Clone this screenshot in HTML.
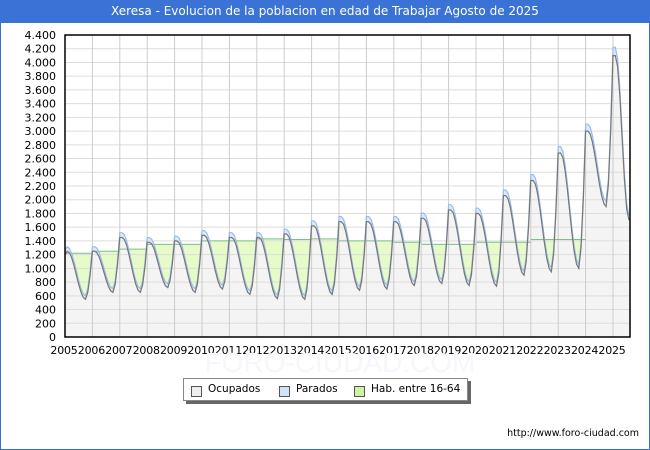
<!DOCTYPE html>
<html><head><meta charset="utf-8"><style>
body{margin:0;width:650px;height:450px;overflow:hidden;background:#fff;font-family:"DejaVu Sans","Liberation Sans",sans-serif;}
#wrap{position:absolute;left:0;top:0;width:648px;height:448px;border:1px solid #3a6fd0;}
#title{position:absolute;left:0;top:0;width:650px;height:23px;background:#3a72d6;color:#fff;font-size:12px;line-height:23px;text-align:center;}
svg{position:absolute;left:0;top:0;}
.yl{font-size:11px;fill:#000;text-anchor:end;}
.xl{font-size:11px;fill:#000;text-anchor:middle;letter-spacing:-0.2px;}
#legend{position:absolute;left:183px;top:378px;width:283px;height:21px;border:1px solid #888;background:#fff;box-shadow:3px 3px 0 #666;font-size:10.5px;}
#legend span{position:absolute;top:4px;}
#legend i{position:absolute;top:7px;width:9px;height:9px;border:1px solid #555;}
#url{position:absolute;right:11px;top:428px;font-size:9.5px;color:#000;}
</style></head><body>
<div id="wrap"></div>
<div id="title">Xeresa - Evolucion de la poblacion en edad de Trabajar Agosto de 2025</div>
<svg id="s" width="650" height="450"></svg>
<div id="legend">
<i style="left:7px;background:#eee"></i><span style="left:24px">Ocupados</span>
<i style="left:95px;background:#cfe4fb"></i><span style="left:112px">Parados</span>
<i style="left:170px;background:#ccf5a0"></i><span style="left:187px">Hab. entre 16-64</span>
</div>
<div id="url">http://www.foro-ciudad.com</div>
<script>
var L=65,R=630,T=35,B=337,K=(B-T)/4400,YW=27.4;
function X(t){return L+t*YW;}function Y(v){return B-v*K;}
var P=[1250,1250,1450,1380,1400,1480,1450,1450,1500,1620,1680,1680,1680,1730,1850,1800,2060,2280,2680,3000,4100];
var Tr=[550,650,650,720,650,700,620,560,550,620,680,700,750,780,750,740,900,950,1000,1900,1700];
var H=[1220,1250,1280,1350,1350,1400,1400,1430,1420,1430,1400,1400,1380,1350,1350,1380,1380,1420,1420,0,0];
var occ=[];
var N=20*12+8;
for(var i=0;i<N;i++){var y=Math.floor(i/12),m=i%12,v;
 if(i==0)v=1200;
 else if(m<=1)v=P[y];
 else if(m<=9){var f=(m-1)/8;v=P[y]+(Tr[y]-P[y])*(1-Math.cos(f*Math.PI))/2;}
 else{var nx=y+1<P.length?P[y+1]:P[y];var f=(m-9)/4;v=Tr[y]+(nx-Tr[y])*(1-Math.cos(f*Math.PI))/2;}
 if(y==20&&m>1){var f=(m-1)/6;v=P[20]+(1700-P[20])*(1-Math.cos(f*Math.PI))/2;}
 occ.push(v);}
var par=occ.map(function(v){return v+40+v*0.02;});
var s='';
var hp='M'+X(0)+','+B;
for(var y=0;y<19;y++){hp+=' L'+X(y)+','+Y(H[y])+' L'+X(y+1)+','+Y(H[y]);}
hp+=' L'+X(19)+','+B+'Z';
s+='<path d="'+hp+'" fill="#e6fbc8"/>';
function area(a){var p='M'+X(0)+','+B;for(var i=0;i<a.length;i++)p+=' L'+X(i/12).toFixed(1)+','+Y(a[i]).toFixed(1);p+=' L'+X((a.length-1)/12).toFixed(1)+','+B+'Z';return p;}
function line(a){var p='';for(var i=0;i<a.length;i++)p+=(i?' L':'M')+X(i/12).toFixed(1)+','+Y(a[i]).toFixed(1);return p;}
s+='<path d="'+area(par)+'" fill="#dbeafc"/>';
s+='<path d="'+area(occ)+'" fill="#f4f4f4"/>';
for(var v=0;v<=4400;v+=200)s+='<line x1="'+L+'" x2="'+R+'" y1="'+Y(v)+'" y2="'+Y(v)+'" stroke="#ddd" stroke-width="1"/>';
for(var y=1;y<=20;y++)s+='<line x1="'+X(y)+'" x2="'+X(y)+'" y1="'+T+'" y2="'+B+'" stroke="#ccc" stroke-width="1"/>';
var hl='';for(var y=0;y<19;y++)hl+='M'+X(y)+','+Y(H[y])+' L'+X(y+1)+','+Y(H[y])+' ';
s+='<path d="'+hl+'" stroke="#7dbf8a" fill="none" stroke-width="1"/>';
s+='<path d="'+line(par)+'" stroke="#9bbbea" fill="none" stroke-width="1.2"/>';
s+='<path d="'+line(occ)+'" stroke="#777" fill="none" stroke-width="1.2"/>';
s+='<rect x="'+L+'" y="'+T+'" width="'+(R-L)+'" height="'+(B-T)+'" fill="none" stroke="#000" stroke-width="1.5"/>';
for(var v=0;v<=4400;v+=200){var t=v>=1000?Math.floor(v/1000)+'.'+('00'+v%1000).slice(-3):v;s+='<text class="yl" x="56" y="'+(Y(v)+4)+'">'+t+'</text>';}
for(var y=0;y<=20;y++)s+='<text class="xl" x="'+(X(y)-1)+'" y="354">'+(2005+y)+'</text>';
s+='<text x="340" y="372" font-size="28" fill="#f6f6fc" text-anchor="middle" font-family="Liberation Sans">FORO-CIUDAD.COM</text>';
document.getElementById('s').innerHTML=s;
</script>
</body></html>
